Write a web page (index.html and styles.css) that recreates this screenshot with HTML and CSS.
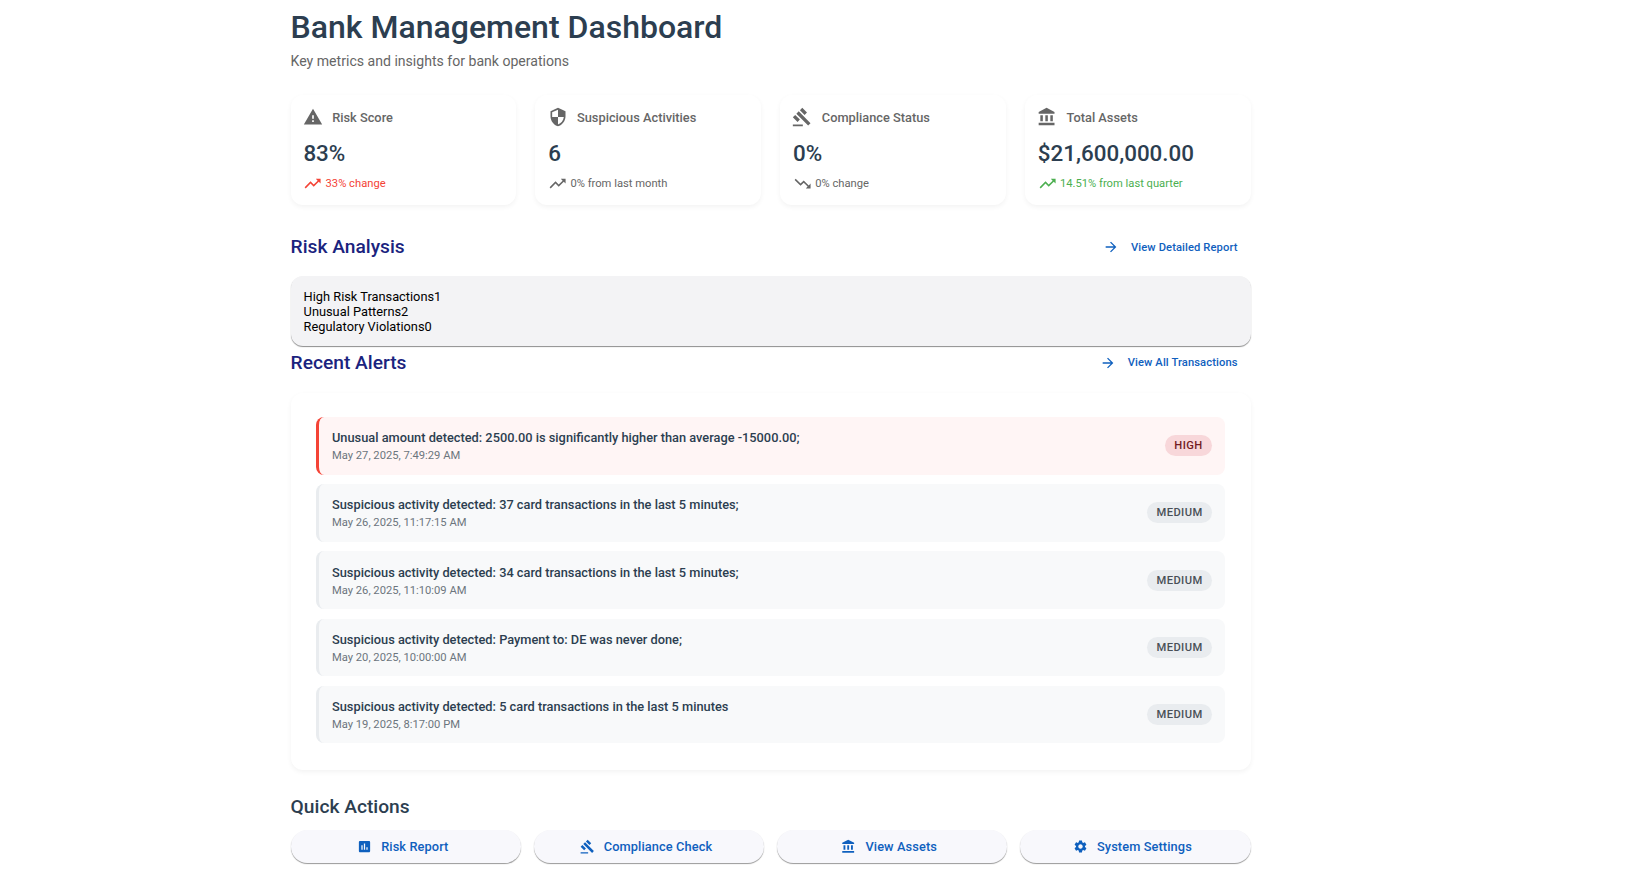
FILE: index.html
```html
<!DOCTYPE html>
<html lang="en">
<head>
<meta charset="utf-8">
<title>Bank Management Dashboard</title>
<link rel="stylesheet" href="styles.css">
</head>
<body>
<svg class="defs" width="0" height="0" aria-hidden="true">
  <symbol id="i-warning" viewBox="0 0 24 24"><path d="M1 21h22L12 2 1 21zm12-3h-2v-2h2v2zm0-4h-2v-4h2v4z"/></symbol>
  <symbol id="i-security" viewBox="0 0 24 24"><path d="M12 1L3 5v6c0 5.55 3.84 10.74 9 12 5.16-1.26 9-6.45 9-12V5l-9-4zm0 10.99h7c-.53 4.12-3.28 7.79-7 8.94V12H5V6.3l7-3.11v8.8z"/></symbol>
  <symbol id="i-gavel" viewBox="0 0 24 24"><path d="M1 21h12v2H1zM5.245 8.07l2.83-2.827 14.14 14.142-2.828 2.828zM12.317 1l5.657 5.656-2.83 2.83-5.654-5.66zM3.825 9.485l5.657 5.657-2.828 2.828-5.657-5.657z"/></symbol>
  <symbol id="i-bank" viewBox="0 0 24 24"><path d="M4 10v7h3v-7H4zm6 0v7h3v-7h-3zM2 22h19v-3H2v3zm14-12v7h3v-7h-3zm-4.5-9L2 6v2h19V6l-9.5-5z"/></symbol>
  <symbol id="i-up" viewBox="0 0 24 24"><path d="M16 6l2.29 2.29-4.88 4.88-4-4L2 16.59 3.41 18l6-6 4 4 6.3-6.29L22 12V6z"/></symbol>
  <symbol id="i-down" viewBox="0 0 24 24"><path d="M16 18l2.29-2.29-4.88-4.88-4 4L2 7.41 3.41 6l6 6 4-4 6.3 6.29L22 12v6z"/></symbol>
  <symbol id="i-arrow" viewBox="0 0 24 24"><path d="M12 4l-1.41 1.41L16.17 11H4v2h12.17l-5.58 5.59L12 20l8-8z"/></symbol>
  <symbol id="i-chart" viewBox="0 0 24 24"><path d="M19 3H5c-1.1 0-2 .9-2 2v14c0 1.1.9 2 2 2h14c1.1 0 2-.9 2-2V5c0-1.1-.9-2-2-2zM9 17H7v-7h2v7zm4 0h-2V7h2v10zm4 0h-2v-4h2v4z"/></symbol>
  <symbol id="i-settings" viewBox="0 0 24 24"><path d="M19.14 12.94c.04-.3.06-.61.06-.94 0-.32-.02-.64-.07-.94l2.03-1.58c.18-.14.23-.41.12-.61l-1.92-3.32c-.12-.22-.37-.29-.59-.22l-2.39.96c-.5-.38-1.03-.7-1.62-.94l-.36-2.54c-.04-.24-.24-.41-.48-.41h-3.84c-.24 0-.43.17-.47.41l-.36 2.54c-.59.24-1.13.57-1.62.94l-2.39-.96c-.22-.08-.47 0-.59.22L2.74 8.87c-.12.21-.08.47.12.61l2.03 1.58c-.05.3-.09.63-.09.94s.02.64.07.94l-2.03 1.58c-.18.14-.23.41-.12.61l1.92 3.32c.12.22.37.29.59.22l2.39-.96c.5.38 1.03.7 1.62.94l.36 2.54c.05.24.24.41.48.41h3.84c.24 0 .44-.17.47-.41l.36-2.54c.59-.24 1.13-.56 1.62-.94l2.39.96c.22.08.47 0 .59-.22l1.92-3.32c.12-.22.07-.47-.12-.61l-2.01-1.58zM12 15.6c-1.98 0-3.6-1.62-3.6-3.6s1.62-3.6 3.6-3.6 3.6 1.62 3.6 3.6-1.62 3.6-3.6 3.6z"/></symbol>
</svg>
<main class="page">
  <header class="head">
    <h1 class="title">Bank Management Dashboard</h1>
    <p class="subtitle">Key metrics and insights for bank operations</p>
  </header>

  <section class="metrics">
    <article class="metric">
      <div class="metric-label"><svg class="icon-lg"><use href="#i-warning"/></svg><span>Risk Score</span></div>
      <div class="metric-value">83%</div>
      <div class="metric-note red"><svg class="icon-sm"><use href="#i-up"/></svg><span>33% change</span></div>
    </article>
    <article class="metric">
      <div class="metric-label"><svg class="icon-lg"><use href="#i-security"/></svg><span>Suspicious Activities</span></div>
      <div class="metric-value">6</div>
      <div class="metric-note"><svg class="icon-sm"><use href="#i-up"/></svg><span>0% from last month</span></div>
    </article>
    <article class="metric">
      <div class="metric-label"><svg class="icon-lg"><use href="#i-gavel"/></svg><span>Compliance Status</span></div>
      <div class="metric-value">0%</div>
      <div class="metric-note"><svg class="icon-sm"><use href="#i-down"/></svg><span>0% change</span></div>
    </article>
    <article class="metric">
      <div class="metric-label"><svg class="icon-lg"><use href="#i-bank"/></svg><span>Total Assets</span></div>
      <div class="metric-value">$21,600,000.00</div>
      <div class="metric-note green"><svg class="icon-sm"><use href="#i-up"/></svg><span>14.51% from last quarter</span></div>
    </article>
  </section>

  <section class="section-head risk-head">
    <h2 class="section-title">Risk Analysis</h2>
    <a class="link"><svg class="icon-link"><use href="#i-arrow"/></svg><span>View Detailed Report</span></a>
  </section>
  <section class="risk-box">
    <div>High Risk Transactions1</div>
    <div>Unusual Patterns2</div>
    <div>Regulatory Violations0</div>
  </section>

  <section class="section-head alerts-head">
    <h2 class="section-title">Recent Alerts</h2>
    <a class="link"><svg class="icon-link"><use href="#i-arrow"/></svg><span>View All Transactions</span></a>
  </section>
  <section class="alerts">
    <div class="alert high">
      <div class="alert-body">
        <div class="alert-text">Unusual amount detected: 2500.00 is significantly higher than average -15000.00;</div>
        <div class="alert-time">May 27, 2025, 7:49:29 AM</div>
      </div>
      <span class="badge badge-high">HIGH</span>
    </div>
    <div class="alert">
      <div class="alert-body">
        <div class="alert-text">Suspicious activity detected: 37 card transactions in the last 5 minutes;</div>
        <div class="alert-time">May 26, 2025, 11:17:15 AM</div>
      </div>
      <span class="badge">MEDIUM</span>
    </div>
    <div class="alert">
      <div class="alert-body">
        <div class="alert-text">Suspicious activity detected: 34 card transactions in the last 5 minutes;</div>
        <div class="alert-time">May 26, 2025, 11:10:09 AM</div>
      </div>
      <span class="badge">MEDIUM</span>
    </div>
    <div class="alert">
      <div class="alert-body">
        <div class="alert-text">Suspicious activity detected: Payment to: DE was never done;</div>
        <div class="alert-time">May 20, 2025, 10:00:00 AM</div>
      </div>
      <span class="badge">MEDIUM</span>
    </div>
    <div class="alert">
      <div class="alert-body">
        <div class="alert-text">Suspicious activity detected: 5 card transactions in the last 5 minutes</div>
        <div class="alert-time">May 19, 2025, 8:17:00 PM</div>
      </div>
      <span class="badge">MEDIUM</span>
    </div>
  </section>

  <h2 class="actions-title">Quick Actions</h2>
  <section class="actions">
    <button class="action"><svg class="icon-btn"><use href="#i-chart"/></svg><span>Risk Report</span></button>
    <button class="action"><svg class="icon-btn"><use href="#i-gavel"/></svg><span>Compliance Check</span></button>
    <button class="action"><svg class="icon-btn"><use href="#i-bank"/></svg><span>View Assets</span></button>
    <button class="action"><svg class="icon-btn"><use href="#i-settings"/></svg><span>System Settings</span></button>
  </section>
</main>
</body>
</html>
```

FILE: styles.css
```css
* { box-sizing: border-box; }
html, body { margin: 0; padding: 0; background: #fff; }
body {
  font-family: Roboto, "Liberation Sans", sans-serif;
  color: #2c3e50;
  height: 894px;
  overflow: hidden;
}
.defs { position: absolute; }
svg { fill: currentColor; flex: none; display: block; }

.page { width: 960px; margin-left: 290.6px; padding-top: 8px; }

.head { height: 87px; }
.title { margin: 0; font-size: 32px; line-height: 38px; font-weight: 500; color: #2c3e50; }
.subtitle { margin: 5px 0 0; font-size: 14.08px; line-height: 20px; color: #666; }

.metrics { display: grid; grid-template-columns: repeat(4, 1fr); gap: 19.2px; }
.metric {
  height: 110px;
  padding: 10px 12.8px;
  background: #fff;
  border-radius: 12px;
  box-shadow: 0 2px 5px rgba(0,0,0,.05);
}
.metric-label { display: flex; align-items: center; gap: 9.4px; height: 24px; font-size: 12.8px; font-weight: 500; color: #666; }
.icon-lg { width: 20px; height: 20px; margin-left: -.6px; }
.metric-value { margin-top: 10px; font-size: 22.4px; line-height: 29px; font-weight: 500; color: #2c3e50; }
.metric-note { display: flex; align-items: center; gap: 3px; margin-top: 6px; height: 19px; font-size: 11.2px; color: #666; }
.icon-sm { width: 19.2px; height: 19.2px; }
.red { color: #f44336; }
.green { color: #4caf50; }

.section-head { display: flex; justify-content: space-between; align-items: center; }
.risk-head { margin-top: 23px; height: 38px; }
.alerts-head { height: 33px; }
.section-title { margin: 0; font-size: 19.2px; line-height: 24px; font-weight: 500; color: #1a237e; }
.link { display: flex; align-items: center; gap: 12px; padding-right: 13px; font-size: 11.2px; font-weight: 500; letter-spacing: .1px; color: #0f60be; }
.icon-link { width: 16px; height: 16px; }

.risk-box {
  margin-top: 10px;
  height: 70px;
  padding: 13px;
  background: #f3f3f5;
  border-radius: 12px;
  box-shadow: 0 1px 1px rgba(0,0,0,.45);
  font-size: 12.8px;
  line-height: 15.2px;
  color: #000;
}

.alerts {
  margin-top: 14px;
  padding: 24px 25.6px 25px;
  height: 377px;
  display: flex;
  flex-direction: column;
  gap: 9.6px;
  background: #fff;
  border-radius: 12px;
  box-shadow: 0 2px 5px rgba(0,0,0,.05);
}
.alert {
  display: flex;
  justify-content: space-between;
  align-items: center;
  height: 57.6px;
  padding: 0 12.8px;
  background: #f8f9fa;
  border-left: 3px solid #e9ecef;
  border-radius: 8px;
}
.alert.high { background: #fff5f5; border-left-color: #f44336; }
.alert-body { padding-top: .8px; }
.alert-text { font-size: 12.8px; line-height: 18px; font-weight: 500; color: #2c3e50; }
.alert-time { margin-top: 1px; font-size: 11.2px; line-height: 15px; color: #6c757d; }
.badge {
  padding: 3px 9.6px;
  border-radius: 12px;
  background: #e9ecef;
  color: #495057;
  font-size: 11.2px;
  line-height: 15px;
  font-weight: 500;
  letter-spacing: .4px;
}
.badge-high { background: #f8d7da; color: #721c24; }

.actions-title { margin: 25px 0 0; font-size: 19.2px; line-height: 24px; font-weight: 500; color: #2c3e50; }
.actions { display: grid; grid-template-columns: repeat(4, 1fr); gap: 12.8px; margin-top: 11px; }
.action {
  display: flex;
  justify-content: center;
  align-items: center;
  gap: 9px;
  height: 32.6px;
  padding: 0 6px 0 0;
  border: 0;
  border-radius: 16.3px;
  background: #f8f8fc;
  color: #0f60be;
  font-family: inherit;
  font-size: 12.8px;
  font-weight: 500;
  letter-spacing: .1px;
  box-shadow: 0 1px 1px rgba(0,0,0,.4);
}
.icon-btn { width: 15px; height: 15px; }
```
